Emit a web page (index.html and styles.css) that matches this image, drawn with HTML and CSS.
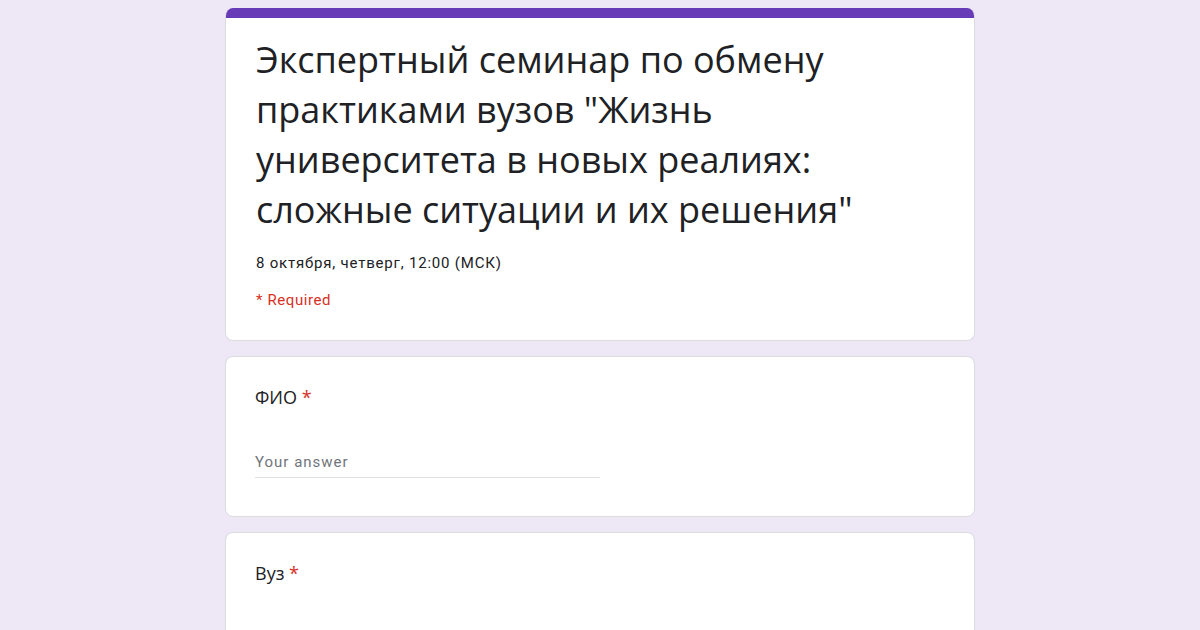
FILE: index.html
```html
<!DOCTYPE html>
<html lang="ru">
<head>
  <meta charset="UTF-8">
  <title>Экспертный семинар</title>
  <link rel="stylesheet" href="styles.css">
</head>
<body>
  <div class="form">
    <div class="card header-card">
      <div class="top-bar"></div>
      <div class="header-body">
        <h1>Экспертный семинар по обмену практиками вузов "Жизнь университета в новых реалиях: сложные ситуации и их решения"</h1>
        <div class="desc">8 октября, четверг, 12:00 (МСК)</div>
        <div class="required-note">* Required</div>
      </div>
    </div>

    <div class="card question">
      <div class="q-title">ФИО <span class="star">*</span></div>
      <div class="answer">Your answer</div>
    </div>

    <div class="card question">
      <div class="q-title">Вуз <span class="star">*</span></div>
      <div class="answer">Your answer</div>
    </div>
  </div>
</body>
</html>
```

FILE: styles.css
```css
body {
  margin: 0;
  background-color: #ede7f6;
  font-family: Roboto, "Noto Sans", sans-serif;
  color: #202124;
}
.form {
  width: 750px;
  margin: 0 auto;
  padding-top: 8px;
  display: flex;
  flex-direction: column;
  gap: 15px;
}
.card {
  background-color: #fff;
  border: 1px solid #dadce0;
  border-radius: 8px;
  box-sizing: border-box;
}
.header-card {
  overflow: hidden;
  border-top: none;
}
.top-bar {
  height: 10px;
  background-color: #673ab7;
}
.header-body {
  padding: 17px 30px 30px;
}
h1 {
  margin: 0;
  font-family: "Open Sans", Roboto, sans-serif;
  font-weight: 400;
  font-size: 36px;
  line-height: 50px;
  color: #202124;
}
.desc {
  margin-top: 18px;
  font-size: 15px;
  line-height: 20px;
  letter-spacing: 0.8px;
}
.required-note {
  margin-top: 17px;
  font-size: 15px;
  line-height: 20px;
  letter-spacing: 0.6px;
  color: #d93025;
}
.question {
  padding: 28px 29px 38px;
}
.q-title {
  font-family: "Open Sans", Roboto, sans-serif;
  font-size: 18px;
  line-height: 24px;
}
.star {
  color: #d93025;
}
.answer {
  margin-top: 43px;
  width: 50%;
  font-size: 15px;
  line-height: 20px;
  letter-spacing: 1px;
  color: #70757a;
  padding-bottom: 5px;
  border-bottom: 1px solid #e0e0e0;
}
```
